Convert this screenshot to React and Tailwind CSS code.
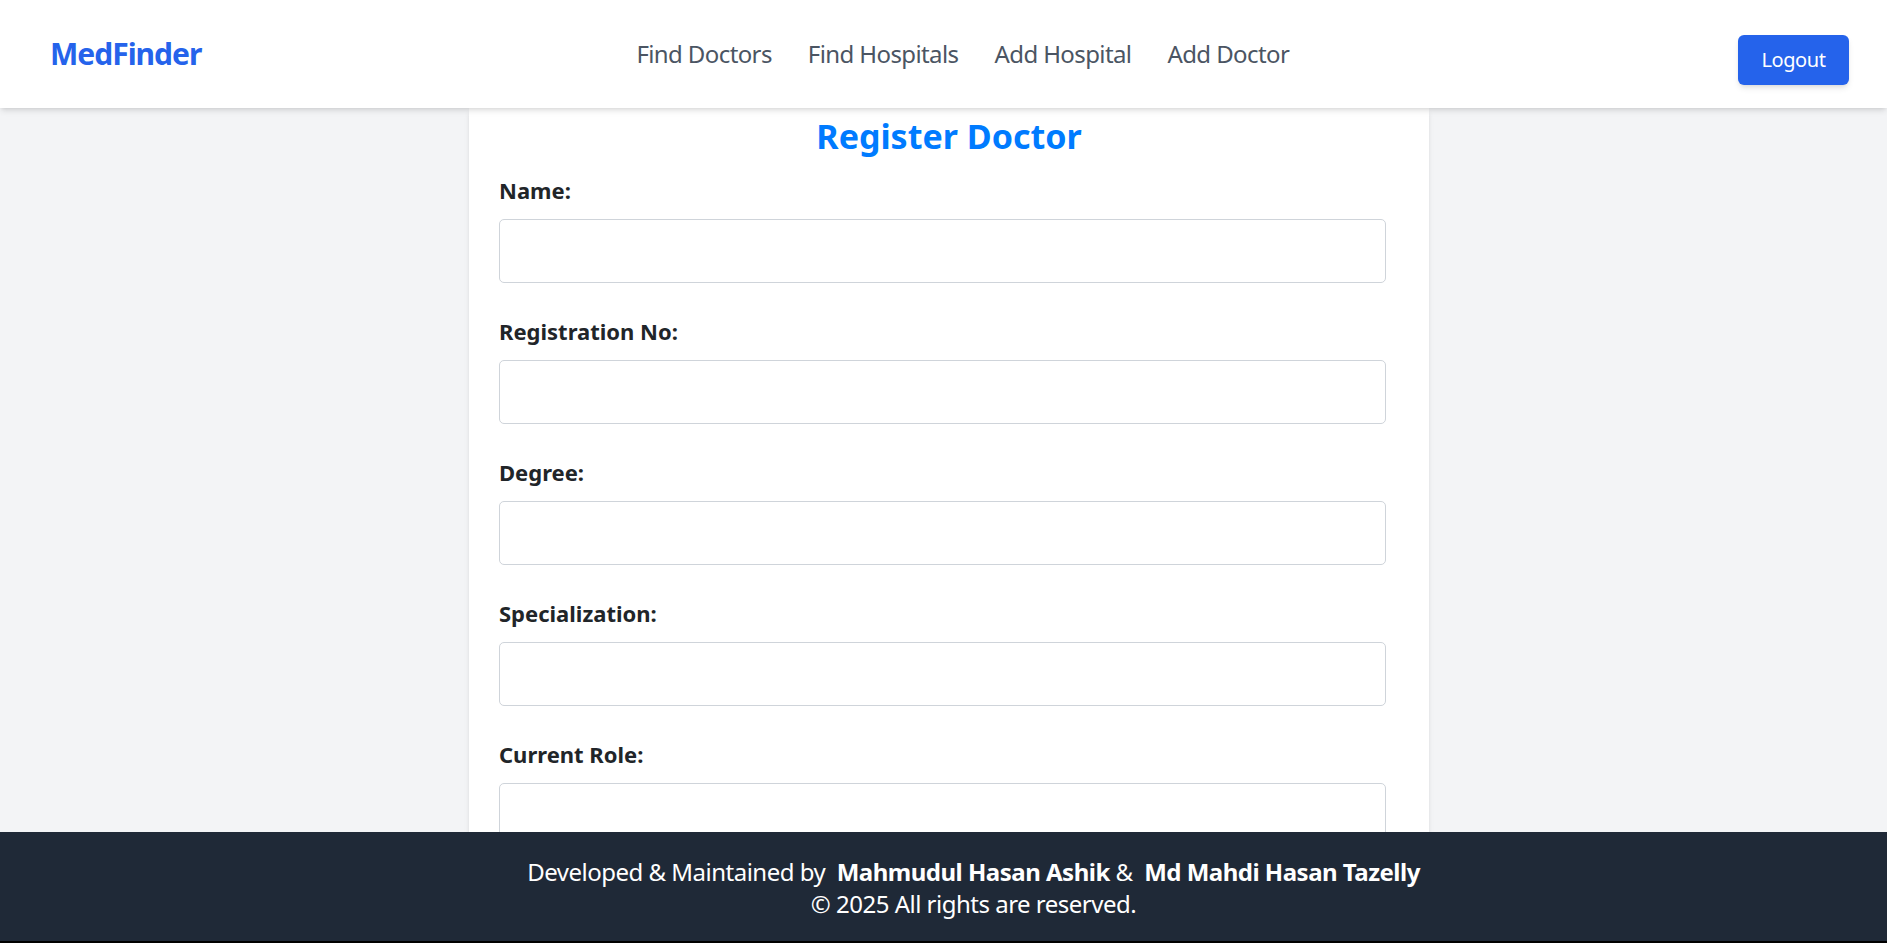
import React, { useState } from "react";

const fields = [
  { name: "name", label: "Name:" },
  { name: "regNo", label: "Registration No:" },
  { name: "degree", label: "Degree:" },
  { name: "specialization", label: "Specialization:" },
  { name: "currentRole", label: "Current Role:" },
];

export default function App() {
  const [form, setForm] = useState({});

  const handleChange = (e) =>
    setForm({ ...form, [e.target.name]: e.target.value });

  return (
    <div
      className="min-h-screen bg-[#f3f4f6] overflow-hidden h-[943px]"
      style={{ fontFamily: '"Noto Sans", "Open Sans", sans-serif' }}
    >
      {/* Navbar */}
      <header className="relative z-10 h-[108px] bg-white shadow-md flex items-center pl-[50px] pr-[38px]">
        <span className="text-[30px] leading-none font-bold text-[#2563eb] tracking-[-1px]">
          MedFinder
        </span>
        <nav className="ml-[435px] flex items-center gap-9 text-2xl text-[#4b5563] tracking-[-0.6px]">
          <a href="#">Find Doctors</a>
          <a href="#">Find Hospitals</a>
          <a href="#">Add Hospital</a>
          <a href="#">Add Doctor</a>
        </nav>
        <button className="ml-auto mt-[11px] h-[50px] w-[111px] rounded-md bg-[#2563eb] text-white text-xl shadow-md tracking-[-0.4px]">
          Logout
        </button>
      </header>

      {/* Form card */}
      <div className="pl-[11px]">
        <div className="mx-auto w-[960px] bg-white shadow-md pt-[4px] pl-[30px] pr-[30px] pb-10">
          <h2 className="text-[34px] leading-[48px] font-bold text-[#007bff] text-center">
            Register Doctor
          </h2>
          <form className="mt-4">
            {fields.map((f) => (
              <div key={f.name} className="mb-[34px]">
                <label className="block text-[22px] leading-7 font-bold text-[#212529]">
                  {f.label}
                </label>
                <input
                  type="text"
                  name={f.name}
                  value={form[f.name] || ""}
                  onChange={handleChange}
                  className="mt-[15px] block h-[64px] w-[887px] rounded-[5px] border border-[#cfd4da] bg-white px-4 text-xl outline-none"
                />
              </div>
            ))}
          </form>
        </div>
      </div>

      {/* Footer */}
      <footer className="fixed bottom-0 left-0 right-0 h-[111px] bg-[#1f2937] border-b-2 border-black flex flex-col items-center justify-center pl-[60px] pt-[2px] text-white text-2xl leading-8 tracking-[-0.5px]">
        <p>
          Developed &amp; Maintained by{" "}
          <span className="font-bold">&nbsp;Mahmudul Hasan Ashik</span> &amp;{" "}
          <span className="font-bold">&nbsp;Md Mahdi Hasan Tazelly</span>
        </p>
        <p>© 2025 All rights are reserved.</p>
      </footer>
    </div>
  );
}
